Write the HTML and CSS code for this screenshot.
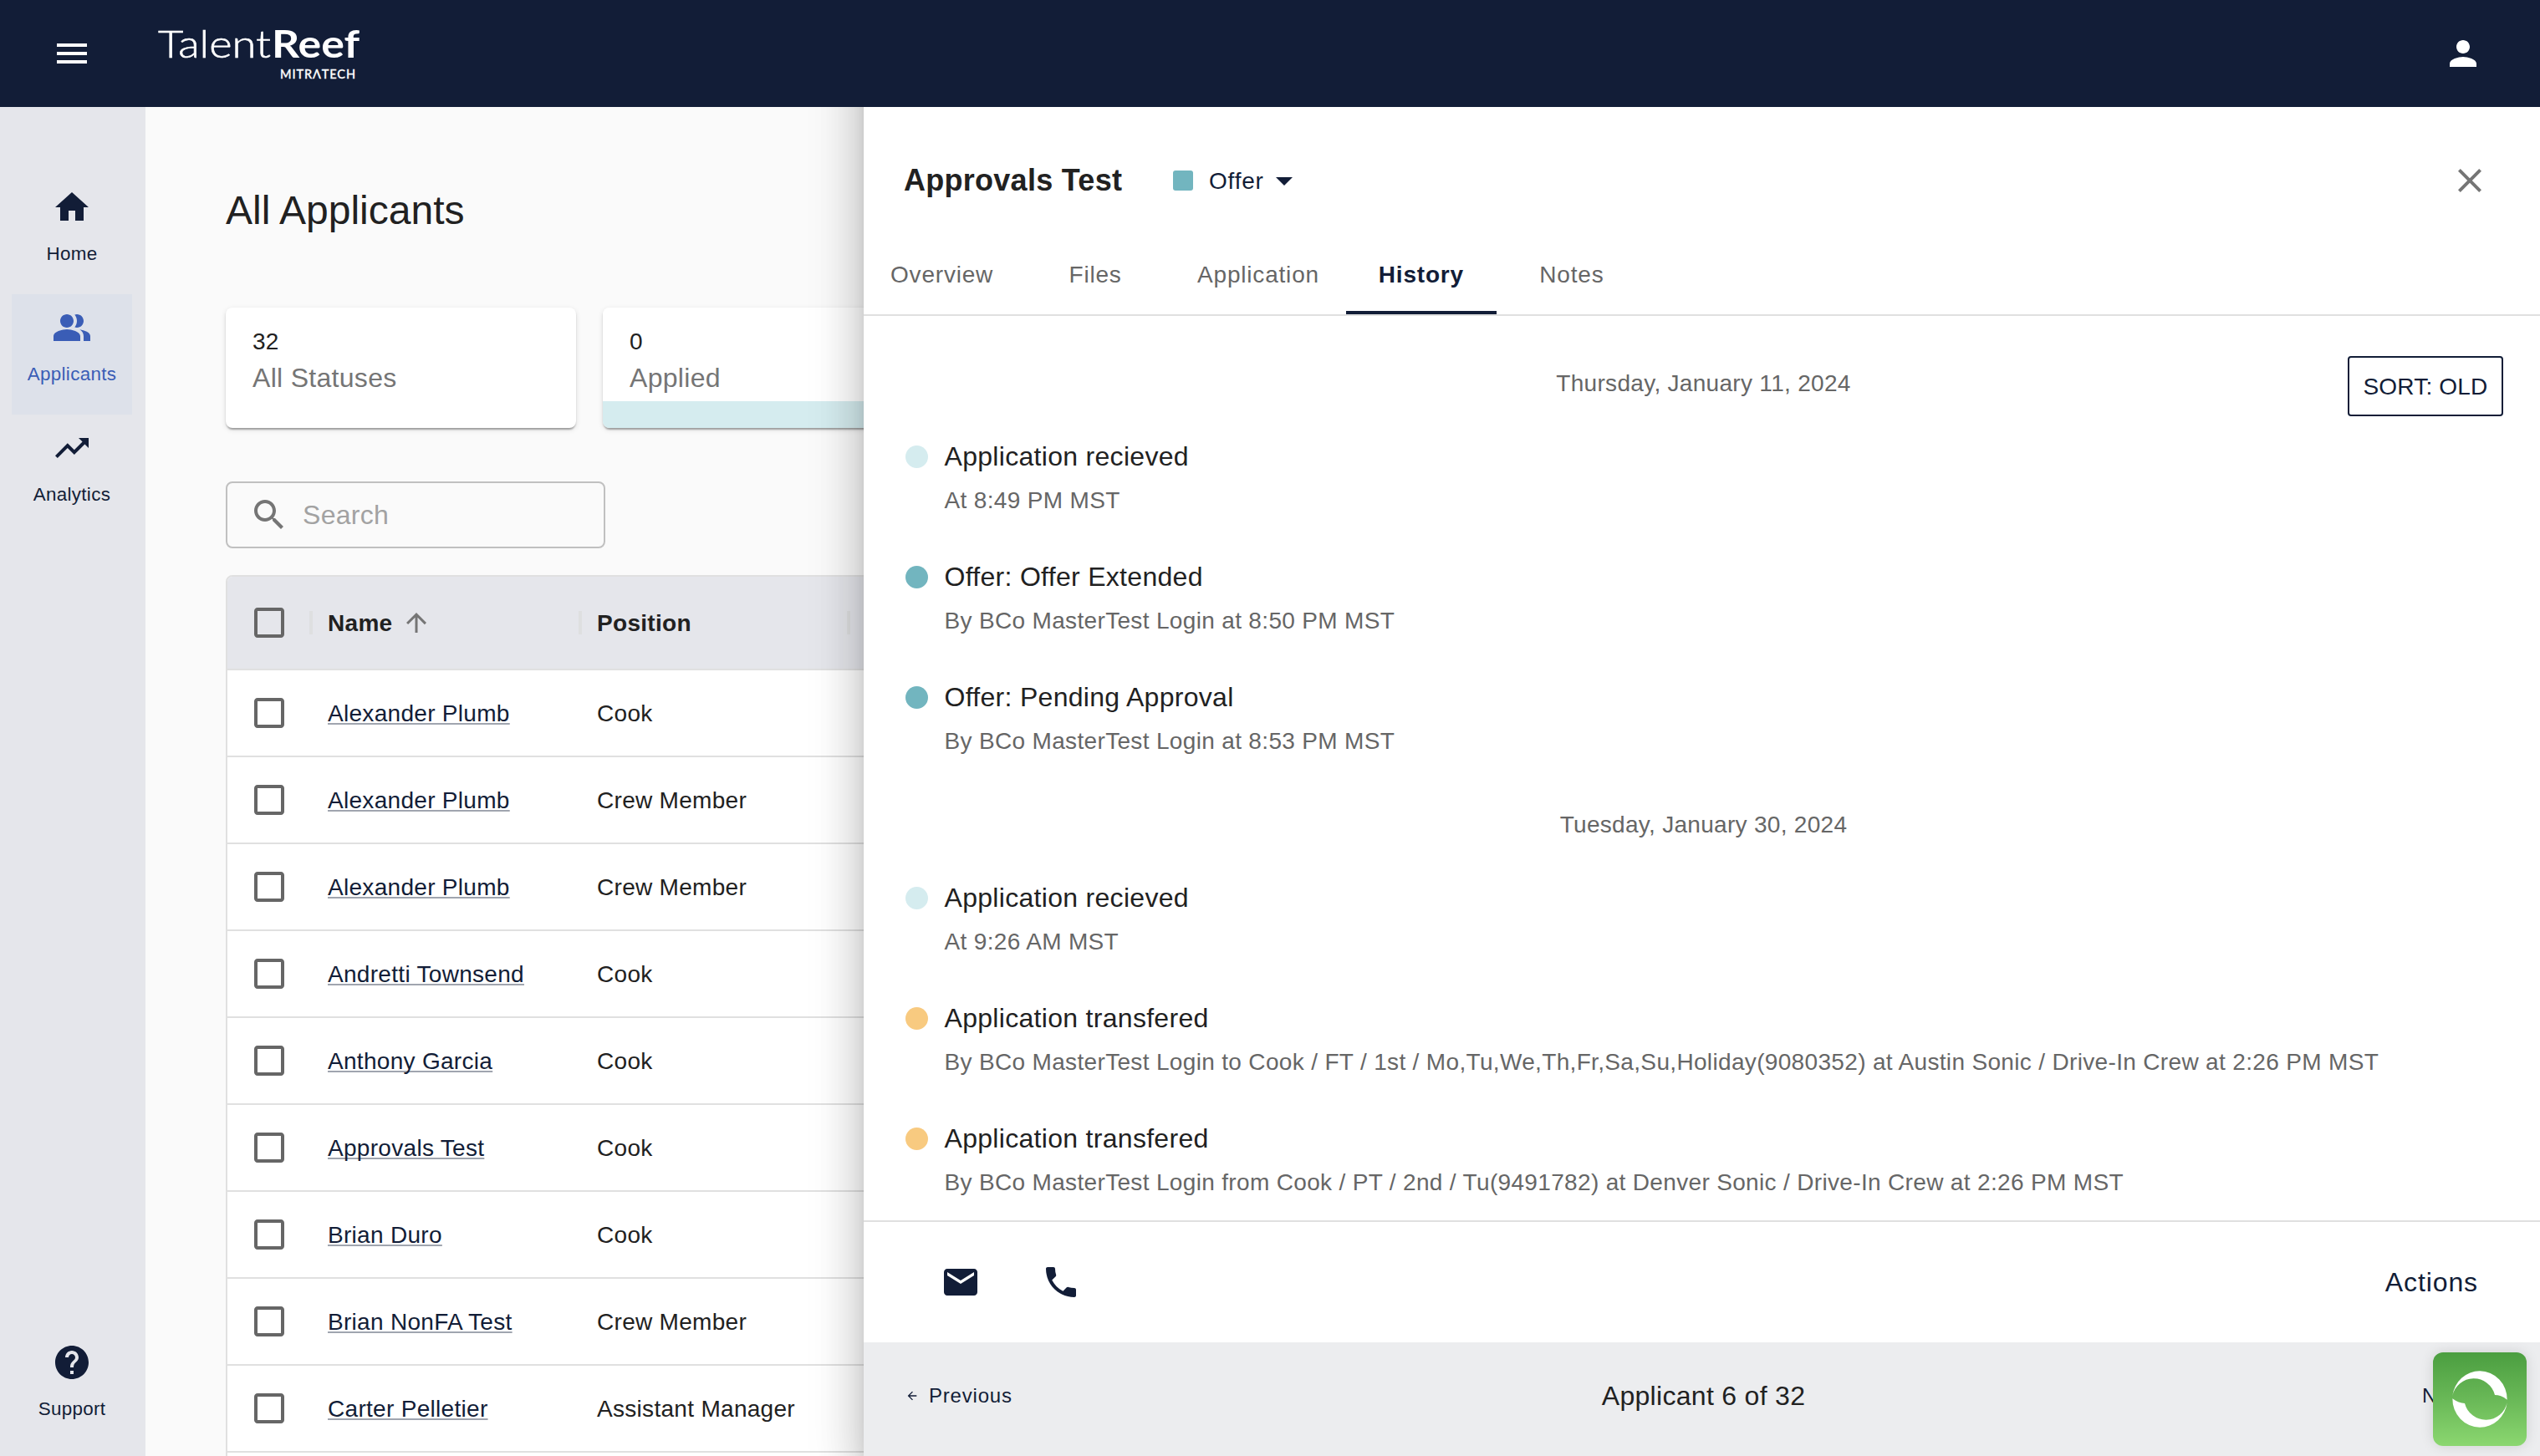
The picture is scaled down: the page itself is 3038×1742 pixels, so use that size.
FILE: index.html
```html
<!DOCTYPE html>
<html lang="en">
<head>
<meta charset="utf-8">
<title>TalentReef - All Applicants</title>
<link rel="stylesheet" href="styles.css">
</head>
<body>
<svg class="defs" aria-hidden="true">
  <symbol id="box" viewBox="0 0 24 24"><path d="M19 5v14H5V5h14m0-2H5c-1.1 0-2 .9-2 2v14c0 1.1.9 2 2 2h14c1.1 0 2-.9 2-2V5c0-1.1-.9-2-2-2z"/></symbol>
</svg>
<header class="topbar">
  <svg class="icon" viewBox="0 0 24 24"><path d="M3 18h18v-2H3v2zm0-5h18v-2H3v2zm0-7v2h18V6H3z"/></svg>
  <svg class="logo" viewBox="0 0 250 80" role="img" aria-label="TalentReef Mitratech">
    <text class="logo-thin" x="8" y="48.5" textLength="135" lengthAdjust="spacingAndGlyphs">Talent</text>
    <text class="logo-bold" x="144" y="48.5" textLength="105" lengthAdjust="spacingAndGlyphs">Reef</text>
    <text class="logo-sub" x="154" y="73.5" textLength="90" lengthAdjust="spacing">MITRΛTECH</text>
  </svg>
  <svg class="icon user" viewBox="0 0 24 24"><path d="M12 12c2.21 0 4-1.79 4-4s-1.79-4-4-4-4 1.79-4 4 1.790 4 4 4zm0 2c-2.670 0-8 1.340-8 4v2h16v-2c0-2.660-5.330-4-8-4z"/></svg>
</header>
<div class="body">
  <nav class="sidebar">
    <a class="nav-item"><svg class="icon" viewBox="0 0 24 24"><path d="M10 20v-6h4v6h5v-8h3L12 3 2 12h3v8z"/></svg><span>Home</span></a>
    <a class="nav-item selected"><svg class="icon" viewBox="0 0 24 24"><path d="M16.67 13.13C18.04 14.06 19 15.32 19 17v3h4v-3c0-2.180-3.570-3.470-6.330-3.870zM15 12c2.210 0 4-1.790 4-4s-1.790-4-4-4c-.47 0-.91.1-1.330.24C14.500 5.270 15 6.580 15 8s-.5 2.730-1.330 3.760c.42.14.86.24 1.330.24zM9 12c2.210 0 4-1.790 4-4s-1.790-4-4-4-4 1.790-4 4 1.790 4 4 4zm0 1c-2.670 0-8 1.340-8 4v3h16v-3c0-2.660-5.330-4-8-4z"/></svg><span>Applicants</span></a>
    <a class="nav-item"><svg class="icon" viewBox="0 0 24 24"><path d="M16 6l2.290 2.290-4.880 4.880-4-4L2 16.590 3.410 18l6-6 4 4 6.300-6.290L22 12V6z"/></svg><span>Analytics</span></a>
    <a class="nav-item support"><svg class="icon" viewBox="0 0 24 24"><path d="M12 2C6.480 2 2 6.480 2 12s4.480 10 10 10 10-4.480 10-10S17.520 2 12 2zm1 17h-2v-2h2v2zm2.070-7.750l-.9.92C13.450 12.900 13 13.500 13 15h-2v-.5c0-1.100.45-2.100 1.170-2.830l1.240-1.260c.37-.36.59-.86.59-1.410 0-1.100-.9-2-2-2s-2 .9-2 2H8c0-2.210 1.790-4 4-4s4 1.790 4 4c0 .88-.36 1.680-.93 2.250z"/></svg><span>Support</span></a>
  </nav>
  <main class="main">
    <h1>All Applicants</h1>
    <div class="cards">
      <div class="card"><span class="count">32</span><span class="status">All Statuses</span></div>
      <div class="card applied"><span class="count">0</span><span class="status">Applied</span></div>
    </div>
    <div class="search"><svg class="icon" viewBox="0 0 24 24"><path d="M15.500 14h-.79l-.28-.27C15.410 12.590 16 11.110 16 9.500 16 5.910 13.090 3 9.500 3S3 5.910 3 9.500 5.910 16 9.500 16c1.610 0 3.090-.59 4.230-1.570l.27.28v.79l5 4.990L20.490 19l-4.990-5zm-6 0C7.010 14 5 11.990 5 9.500S7.010 5 9.500 5 14 7.010 14 9.500 11.990 14 9.500 14z"/></svg><span>Search</span></div>
    <div class="table">
      <div class="row head">
        <div class="cell check"><svg class="icon"><use href="#box"/></svg></div>
        <div class="cell">Name<svg class="sort-arrow" viewBox="0 0 24 24"><path d="M4 12l1.410 1.410L11 7.830V20h2V7.830l5.580 5.590L20 12l-8-8-8 8z"/></svg></div>
        <div class="cell">Position</div>
      </div>
      <div class="row"><div class="cell check"><svg class="icon"><use href="#box"/></svg></div><div class="cell"><a>Alexander Plumb</a></div><div class="cell">Cook</div></div>
      <div class="row"><div class="cell check"><svg class="icon"><use href="#box"/></svg></div><div class="cell"><a>Alexander Plumb</a></div><div class="cell">Crew Member</div></div>
      <div class="row"><div class="cell check"><svg class="icon"><use href="#box"/></svg></div><div class="cell"><a>Alexander Plumb</a></div><div class="cell">Crew Member</div></div>
      <div class="row"><div class="cell check"><svg class="icon"><use href="#box"/></svg></div><div class="cell"><a>Andretti Townsend</a></div><div class="cell">Cook</div></div>
      <div class="row"><div class="cell check"><svg class="icon"><use href="#box"/></svg></div><div class="cell"><a>Anthony Garcia</a></div><div class="cell">Cook</div></div>
      <div class="row"><div class="cell check"><svg class="icon"><use href="#box"/></svg></div><div class="cell"><a>Approvals Test</a></div><div class="cell">Cook</div></div>
      <div class="row"><div class="cell check"><svg class="icon"><use href="#box"/></svg></div><div class="cell"><a>Brian Duro</a></div><div class="cell">Cook</div></div>
      <div class="row"><div class="cell check"><svg class="icon"><use href="#box"/></svg></div><div class="cell"><a>Brian NonFA Test</a></div><div class="cell">Crew Member</div></div>
      <div class="row"><div class="cell check"><svg class="icon"><use href="#box"/></svg></div><div class="cell"><a>Carter Pelletier</a></div><div class="cell">Assistant Manager</div></div>
      <div class="row"></div>
    </div>
  </main>
</div>

<aside class="drawer">
  <div class="drawer-head">
    <h2>Approvals Test</h2>
    <div class="stage"><i class="swatch"></i><span>Offer</span><svg class="icon" viewBox="0 0 24 24"><path d="M7 10l5 5 5-5z"/></svg></div>
    <svg class="icon close" viewBox="0 0 24 24"><path d="M19 6.410L17.590 5 12 10.590 6.410 5 5 6.410 10.590 12 5 17.590 6.410 19 12 13.410 17.590 19 19 17.590 13.410 12z"/></svg>
  </div>
  <div class="tabs">
    <div class="tab">Overview</div><div class="tab">Files</div><div class="tab">Application</div><div class="tab active">History</div><div class="tab">Notes</div>
  </div>
  <div class="history">
    <div class="date"><span>Thursday, January 11, 2024</span><button class="sort">SORT: OLD</button></div>
    <div class="event"><i class="dot applied-dot"></i><div><h3>Application recieved</h3><p>At 8:49 PM MST</p></div></div>
    <div class="event"><i class="dot offer-dot"></i><div><h3>Offer: Offer Extended</h3><p>By BCo MasterTest Login at 8:50 PM MST</p></div></div>
    <div class="event"><i class="dot offer-dot"></i><div><h3>Offer: Pending Approval</h3><p>By BCo MasterTest Login at 8:53 PM MST</p></div></div>
    <div class="date"><span>Tuesday, January 30, 2024</span></div>
    <div class="event"><i class="dot applied-dot"></i><div><h3>Application recieved</h3><p>At 9:26 AM MST</p></div></div>
    <div class="event"><i class="dot transfer-dot"></i><div><h3>Application transfered</h3><p>By BCo MasterTest Login to Cook / FT / 1st / Mo,Tu,We,Th,Fr,Sa,Su,Holiday(9080352) at Austin Sonic / Drive-In Crew at 2:26 PM MST</p></div></div>
    <div class="event"><i class="dot transfer-dot"></i><div><h3>Application transfered</h3><p>By BCo MasterTest Login from Cook / PT / 2nd / Tu(9491782) at Denver Sonic / Drive-In Crew at 2:26 PM MST</p></div></div>
  </div>
  <div class="actions">
    <svg class="icon" viewBox="0 0 24 24"><path d="M20 4H4c-1.100 0-1.990.9-1.990 2L2 18c0 1.100.9 2 2 2h16c1.100 0 2-.9 2-2V6c0-1.100-.9-2-2-2zm0 4l-8 5-8-5V6l8 5 8-5v2z"/></svg>
    <svg class="icon" viewBox="0 0 24 24"><path d="M6.620 10.790c1.440 2.830 3.760 5.140 6.590 6.590l2.200-2.200c.27-.27.67-.36 1.020-.24 1.120.37 2.330.57 3.570.57.55 0 1 .45 1 1V20c0 .55-.45 1-1 1-9.390 0-17-7.610-17-17 0-.55.45-1 1-1h3.500c.55 0 1 .45 1 1 0 1.250.2 2.450.57 3.570.11.35.03.74-.25 1.020l-2.200 2.200z"/></svg>
    <span>Actions</span>
  </div>
  <div class="pager">
    <span class="prev"><svg viewBox="0 0 24 24"><path d="M20 11H7.830l5.590-5.590L12 4l-8 8 8 8 1.410-1.410L7.830 13H20v-2z"/></svg>Previous</span>
    <span class="position">Applicant 6 of 32</span>
    <span class="next">Next</span>
  </div>
</aside>
<div class="widget"><svg viewBox="0 0 336 336"><path d="M70 156A99 101 0 0 1 168 67A99 101 0 0 1 266 170C251 158 236 153 222 153A78 78 0 0 0 70 156zM266 180A99 101 0 0 1 168 269A99 101 0 0 1 70 166C85 178 100 183 114 183A78 78 0 0 0 266 180z"/></svg></div>
</body>
</html>
```
FILE: styles.css
```css
* { box-sizing: border-box; }
html, body { margin: 0; height: 1742px; overflow: hidden; }
body {
  position: relative;
  display: flex;
  flex-direction: column;
  background: #fafafa;
  color: #212121;
  font-family: "Liberation Sans", Arial, Helvetica, sans-serif;
  font-size: 28px;
  letter-spacing: 0.3px;
}
h1, h2, h3, p { margin: 0; font-weight: 400; }
.defs { display: none; }
.icon { width: 48px; height: 48px; flex: none; fill: currentColor; }

/* Top bar */
.topbar {
  position: relative;
  z-index: 3;
  flex: none;
  height: 128px;
  padding: 0 68px 0 62px;
  display: flex;
  align-items: center;
  background: #121d37;
  color: #fff;
}
.logo { width: 250px; height: 80px; margin: -8px 0 0 71px; fill: #fff; font-family: Lato, sans-serif; letter-spacing: 0; overflow: visible; }
.logo-thin { font-size: 45px; font-weight: 300; stroke: #fff; stroke-width: .6px; }
.logo-bold { font-size: 45px; font-weight: 700; }
.logo-sub { font-size: 14.5px; font-weight: 500; stroke: #fff; stroke-width: .3px; }
.user { margin-left: auto; }

/* Navigation */
.body { flex: 1; min-height: 0; display: flex; }
.sidebar {
  flex: none;
  width: 174px;
  padding: 80px 16px 0 14px;
  display: flex;
  flex-direction: column;
  background: #e5e6eb;
  color: #121d37;
}
.nav-item {
  height: 144px;
  padding-top: 16px;
  display: flex;
  flex-direction: column;
  align-items: center;
  gap: 16px;
  font-size: 22.4px;
  line-height: 32px;
}
.nav-item.selected { background: #dde1ea; color: #3a5db6; }
.support { margin: auto 0 8px; }

/* Applicant list */
.main { flex: 1; min-width: 0; padding: 80px 48px 0 96px; overflow: hidden; }
h1 { height: 160px; padding-top: 16px; font-size: 48px; line-height: 56px; letter-spacing: 0; }
.cards { display: flex; gap: 32px; }
.card {
  flex: none;
  width: 419px;
  height: 144px;
  padding: 21px 32px;
  display: flex;
  flex-direction: column;
  border-radius: 8px;
  background: #fff;
  box-shadow: 0 4px 2px -2px rgba(0,0,0,.2), 0 2px 2px rgba(0,0,0,.14), 0 2px 6px rgba(0,0,0,.12);
}
.card.applied { background: linear-gradient(#fff 112px, #d5ecef 112px); }
.count { line-height: 40px; }
.status { margin-top: -1px; font-size: 32px; line-height: 48px; color: #757575; }
.search {
  width: 454px;
  height: 80px;
  margin: 64px 0 32px;
  padding-left: 26px;
  display: flex;
  align-items: center;
  gap: 16px;
  border: 2px solid #c0c0c0;
  border-radius: 8px;
  font-size: 32px;
  color: #a2a2a2;
}
.search .icon { color: #757575; }
.table { border: 2px solid #e0e0e0; border-radius: 8px; background: #fff; overflow: hidden; }
.row { height: 104px; display: grid; grid-template-columns: 100px 322px 321px 1fr; align-items: center; border-bottom: 2px solid #e0e0e0; }
.row.head { height: 112px; background: #e5e6eb; font-weight: 700; }
.cell { height: 28px; padding: 2px 0 0 20px; display: flex; align-items: center; white-space: nowrap; }
.check { padding: 0 0 0 26px; color: #666; }
.head .cell { border-right: 4px solid #dedfe0; margin-right: -2px; }
.cell a { color: #121d37; text-decoration: underline 2px #a0a5af; text-underline-offset: 2px; text-decoration-skip-ink: none; }
.sort-arrow { width: 36px; height: 36px; margin: -2px 0 0 11px; fill: #757575; }

/* Applicant drawer */
.drawer {
  position: absolute;
  z-index: 2;
  top: 0;
  right: 0;
  width: 2005px;
  height: 1742px;
  padding-top: 128px;
  display: flex;
  flex-direction: column;
  background: #fff;
  box-shadow: 0 16px 20px -10px rgba(0,0,0,.2), 0 32px 48px 4px rgba(0,0,0,.14), 0 12px 60px 10px rgba(0,0,0,.12);
}
.drawer-head { flex: none; height: 154px; padding: 22px 60px 0 48px; display: flex; align-items: center; }
h2 { font-size: 36px; font-weight: 700; letter-spacing: .27px; }
.drawer-head h2 { flex: none; width: 322px; }
.stage { display: flex; align-items: center; color: #121d37; letter-spacing: .8px; }
.swatch { width: 24px; height: 24px; margin-right: 19px; border-radius: 3px; background: #72b5bf; }
.stage span { width: 66px; padding-top: 2px; }
.close { margin-left: auto; color: #757575; }
.tabs { flex: none; height: 96px; display: flex; border-bottom: 2px solid #e0e0e0; color: #666; letter-spacing: .8px; }
.tab { min-width: 180px; padding: 4px 32px 0; display: flex; align-items: center; justify-content: center; border-bottom: 4px solid transparent; }
.tab.active { border-color: #121d37; color: #121d37; font-weight: 700; }
.history { flex: 1; min-height: 0; overflow: hidden; padding: 48px 44px 0 48px; }
.date { height: 96px; display: grid; grid-template-columns: 1fr auto 1fr; align-items: start; color: #666; }
.date span { grid-column: 2; padding-top: 13px; line-height: 40px; }
.sort {
  width: 186px;
  height: 72px;
  padding: 2px 0 0;
  justify-self: end;
  border: 2px solid #121d37;
  border-radius: 4px;
  background: #fff;
  color: #121d37;
  font: inherit;
  letter-spacing: .2px;
}
.event { height: 144px; display: flex; gap: 19.500px; white-space: nowrap; }
.dot { flex: none; width: 27px; height: 27px; margin: 10.500px 0 0 2px; border-radius: 50%; }
.applied-dot { background: #d5ecef; }
.offer-dot { background: #72b5bf; }
.transfer-dot { background: #f8ca80; }
h3 { font-size: 32px; line-height: 48px; }
.event p { margin-top: 9px; line-height: 40px; letter-spacing: .335px; color: #666; }
.actions { flex: none; height: 146px; padding: 0 74px 0 92px; display: flex; align-items: center; gap: 72px; border-top: 2px solid #e0e0e0; color: #121d37; }
.actions span { margin-left: auto; font-size: 32px; letter-spacing: .9px; }
.pager { flex: none; height: 136px; padding: 0 44px 8px 48px; display: grid; grid-template-columns: 1fr auto 1fr; align-items: center; background: #ecedef; color: #121d37; font-size: 24px; letter-spacing: .8px; }
.prev { display: flex; align-items: center; gap: 12px; padding-left: 2px; }
.prev svg { width: 16px; height: 16px; fill: currentColor; }
.position { color: #212121; font-size: 32px; letter-spacing: .3px; }
.next { justify-self: end; width: 97px; }

/* Floating help button */
.widget {
  position: absolute;
  z-index: 4;
  right: 16px;
  bottom: 12px;
  width: 112px;
  height: 112px;
  border-radius: 12px;
  background: linear-gradient(#4b9e40, #69b857 50%, #8bd770);
  box-shadow: 0 0 16px rgba(0,0,0,.12);
}
.widget svg { display: block; width: 112px; height: 112px; fill: #fff; }
```
